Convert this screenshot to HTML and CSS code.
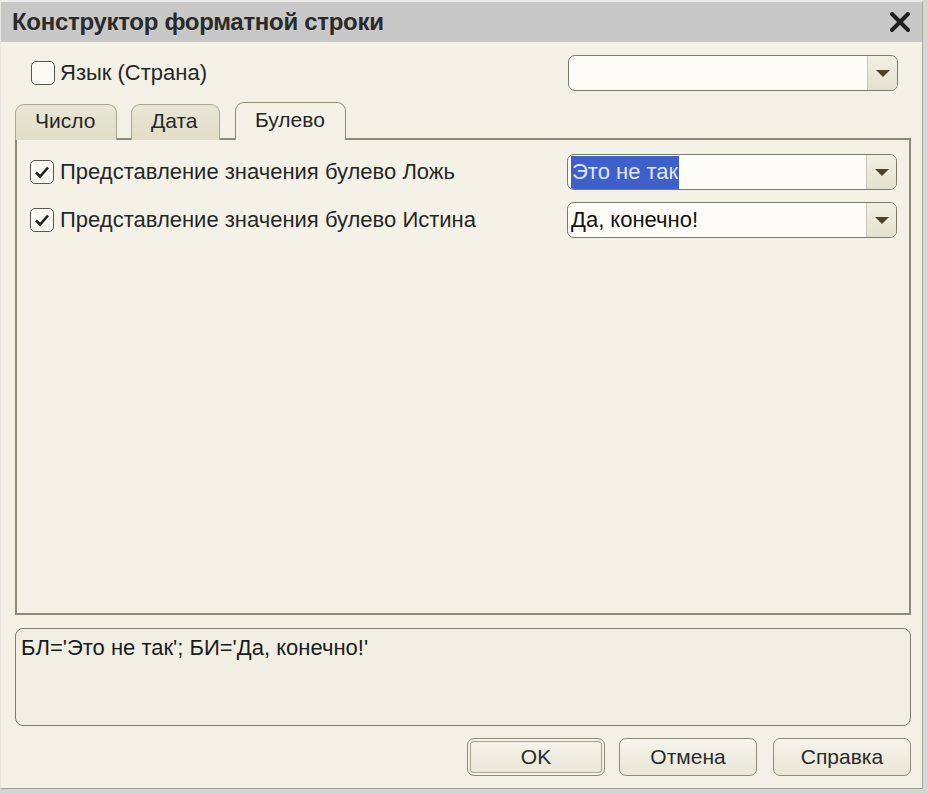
FILE: index.html
```html
<!DOCTYPE html>
<html lang="ru">
<head>
  <meta charset="UTF-8" />
  <title>Конструктор форматной строки</title>
  <link rel="stylesheet" href="styles.css">
</head>
<body>
  <div class="window">
    <div class="titlebar">
      <span class="title">Конструктор форматной строки</span>
      <svg class="close" width="22" height="22" viewBox="0 0 22 22">
        <path d="M3 3 L19 19 M19 3 L3 19" stroke="#1e1e1e" stroke-width="4" stroke-linecap="round"/>
      </svg>
    </div>

    <div class="content">
      <div class="row top-row">
        <label class="check">
          <span class="box"></span>
          <span class="label">Язык (Страна)</span>
        </label>
        <div class="combo">
          <div class="combo-text"></div>
          <div class="combo-btn"><span class="arrow"></span></div>
        </div>
      </div>

      <div class="tabs">
        <div class="tab tab-num">Число</div>
        <div class="tab tab-date">Дата</div>
        <div class="tab tab-bool active">Булево</div>
      </div>

      <div class="panel">
        <div class="row">
          <label class="check">
            <span class="box checked"><svg width="16" height="14" viewBox="0 0 16 14"><path d="M2 7.5 L6 11.5 L14 2.5" fill="none" stroke="#222" stroke-width="2.6"/></svg></span>
            <span class="label">Представление значения булево Ложь</span>
          </label>
          <div class="combo">
            <div class="combo-text"><span class="selected">Это не так</span></div>
            <div class="combo-btn"><span class="arrow"></span></div>
          </div>
        </div>
        <div class="row">
          <label class="check">
            <span class="box checked"><svg width="16" height="14" viewBox="0 0 16 14"><path d="M2 7.5 L6 11.5 L14 2.5" fill="none" stroke="#222" stroke-width="2.6"/></svg></span>
            <span class="label">Представление значения булево Истина</span>
          </label>
          <div class="combo">
            <div class="combo-text">Да, конечно!</div>
            <div class="combo-btn"><span class="arrow"></span></div>
          </div>
        </div>
      </div>

      <div class="result">БЛ='Это не так'; БИ='Да, конечно!'</div>

      <div class="buttons">
        <button class="btn default">OK</button>
        <button class="btn">Отмена</button>
        <button class="btn btn-help">Справка</button>
      </div>
    </div>
  </div>
</body>
</html>
```

FILE: styles.css
```css
* { box-sizing: border-box; }
body {
  margin: 0;
  background: #d6d6d2;
  font-family: 'Liberation Sans', Arial, sans-serif;
  color: #1f1f1f;
}
.window {
  width: 923px;
  height: 789px;
  background: #f3f1e5;
  border-top: 2px solid #ececec;
  border-left: 1px solid #e6e6e0;
  border-right: 1px solid #a8a8a0;
  border-bottom: 1px solid #a0a09a;
  display: flex;
  flex-direction: column;
}
.titlebar {
  height: 40px;
  background: #c8c8c8;
  display: flex;
  align-items: center;
  justify-content: space-between;
  padding: 0 11px 0 11px;
}
.title {
  font-size: 24px;
  font-weight: bold;
  color: #2a2a2a;
  letter-spacing: -0.3px;
}
.content {
  flex: 1;
  display: flex;
  flex-direction: column;
  padding: 13px 11px 12px 14px;
}
.row {
  display: flex;
  align-items: center;
  justify-content: space-between;
}
.top-row {
  padding-left: 16px;
  padding-right: 13px;
}
.check {
  display: flex;
  align-items: center;
  gap: 5px;
}
.box {
  width: 24px;
  height: 24px;
  border: 1.5px solid #56564c;
  border-radius: 5px;
  background: #fbfaf4;
  display: flex;
  align-items: center;
  justify-content: center;
}
.label {
  font-size: 22px;
  color: #262626;
}
.combo {
  width: 330px;
  height: 36px;
  border: 1.5px solid #7a7a6a;
  border-radius: 7px;
  background: #fdfcf7;
  display: flex;
  overflow: hidden;
}
.combo-text {
  flex: 1;
  display: flex;
  align-items: center;
  padding-left: 3px;
  font-size: 22px;
  color: #111;
}
.selected {
  background: #3f5fcb;
  color: #dfe6ff;
  padding: 3px 1px 4px 1px;
}
.combo-btn {
  width: 30px;
  border-left: 1px solid #c9c5b0;
  background: linear-gradient(#f2f0e4, #e4e1cf);
  display: flex;
  align-items: center;
  justify-content: center;
}
.arrow {
  width: 0;
  height: 0;
  border-left: 7px solid transparent;
  border-right: 7px solid transparent;
  border-top: 7px solid #4a4324;
}
.tabs {
  display: flex;
  align-items: flex-end;
  gap: 14px;
  margin-top: 11px;
  position: relative;
  z-index: 1;
  margin-bottom: -2px;
}
.tab {
  height: 36px;
  padding: 0 19px 3px;
  display: flex;
  align-items: center;
  font-size: 21px;
  color: #262626;
  background: linear-gradient(#e9e6d6, #e1ddc8);
  border: 1.5px solid #a9a690;
  border-bottom: none;
  border-radius: 9px 9px 0 0;
}
.tab-num { width: 102px; }
.tab-date { width: 89px; }
.tab-bool { width: 111px; margin-left: 1px; }
.tab.active {
  height: 38px;
  background: #f4f2e7;
  border: 1.5px solid #8e8b76;
  border-bottom: none;
  padding-bottom: 4px;
}
.panel {
  height: 477px;
  border: 2px solid #8c8a78;
  background: #f4f2e7;
  padding: 14px 12px 0 13px;
  display: flex;
  flex-direction: column;
  gap: 12px;
  width: 896px;
}
.panel .check { gap: 6px; }
.result {
  margin-top: 13px;
  height: 98px;
  width: 896px;
  border: 1.5px solid #7e7c6c;
  border-radius: 8px;
  background: #f1efe4;
  padding: 6px 5px;
  font-size: 22px;
  color: #1b1b1b;
}
.buttons {
  margin-top: 12px;
  display: flex;
  justify-content: flex-end;
  gap: 14px;
}
.btn {
  width: 138px;
  height: 38px;
  border: 1.5px solid #8e8c78;
  border-radius: 7px;
  background: linear-gradient(#f6f4ea, #e9e6d7);
  font-family: 'Liberation Sans', Arial, sans-serif;
  font-size: 21px;
  color: #2a2a2a;
  padding: 0;
}
.btn.default {
  box-shadow: inset 0 0 0 2px #f4f2e6, inset 0 0 0 3px #a6a490;
}
.btn-help { margin-left: 2px; }
```
